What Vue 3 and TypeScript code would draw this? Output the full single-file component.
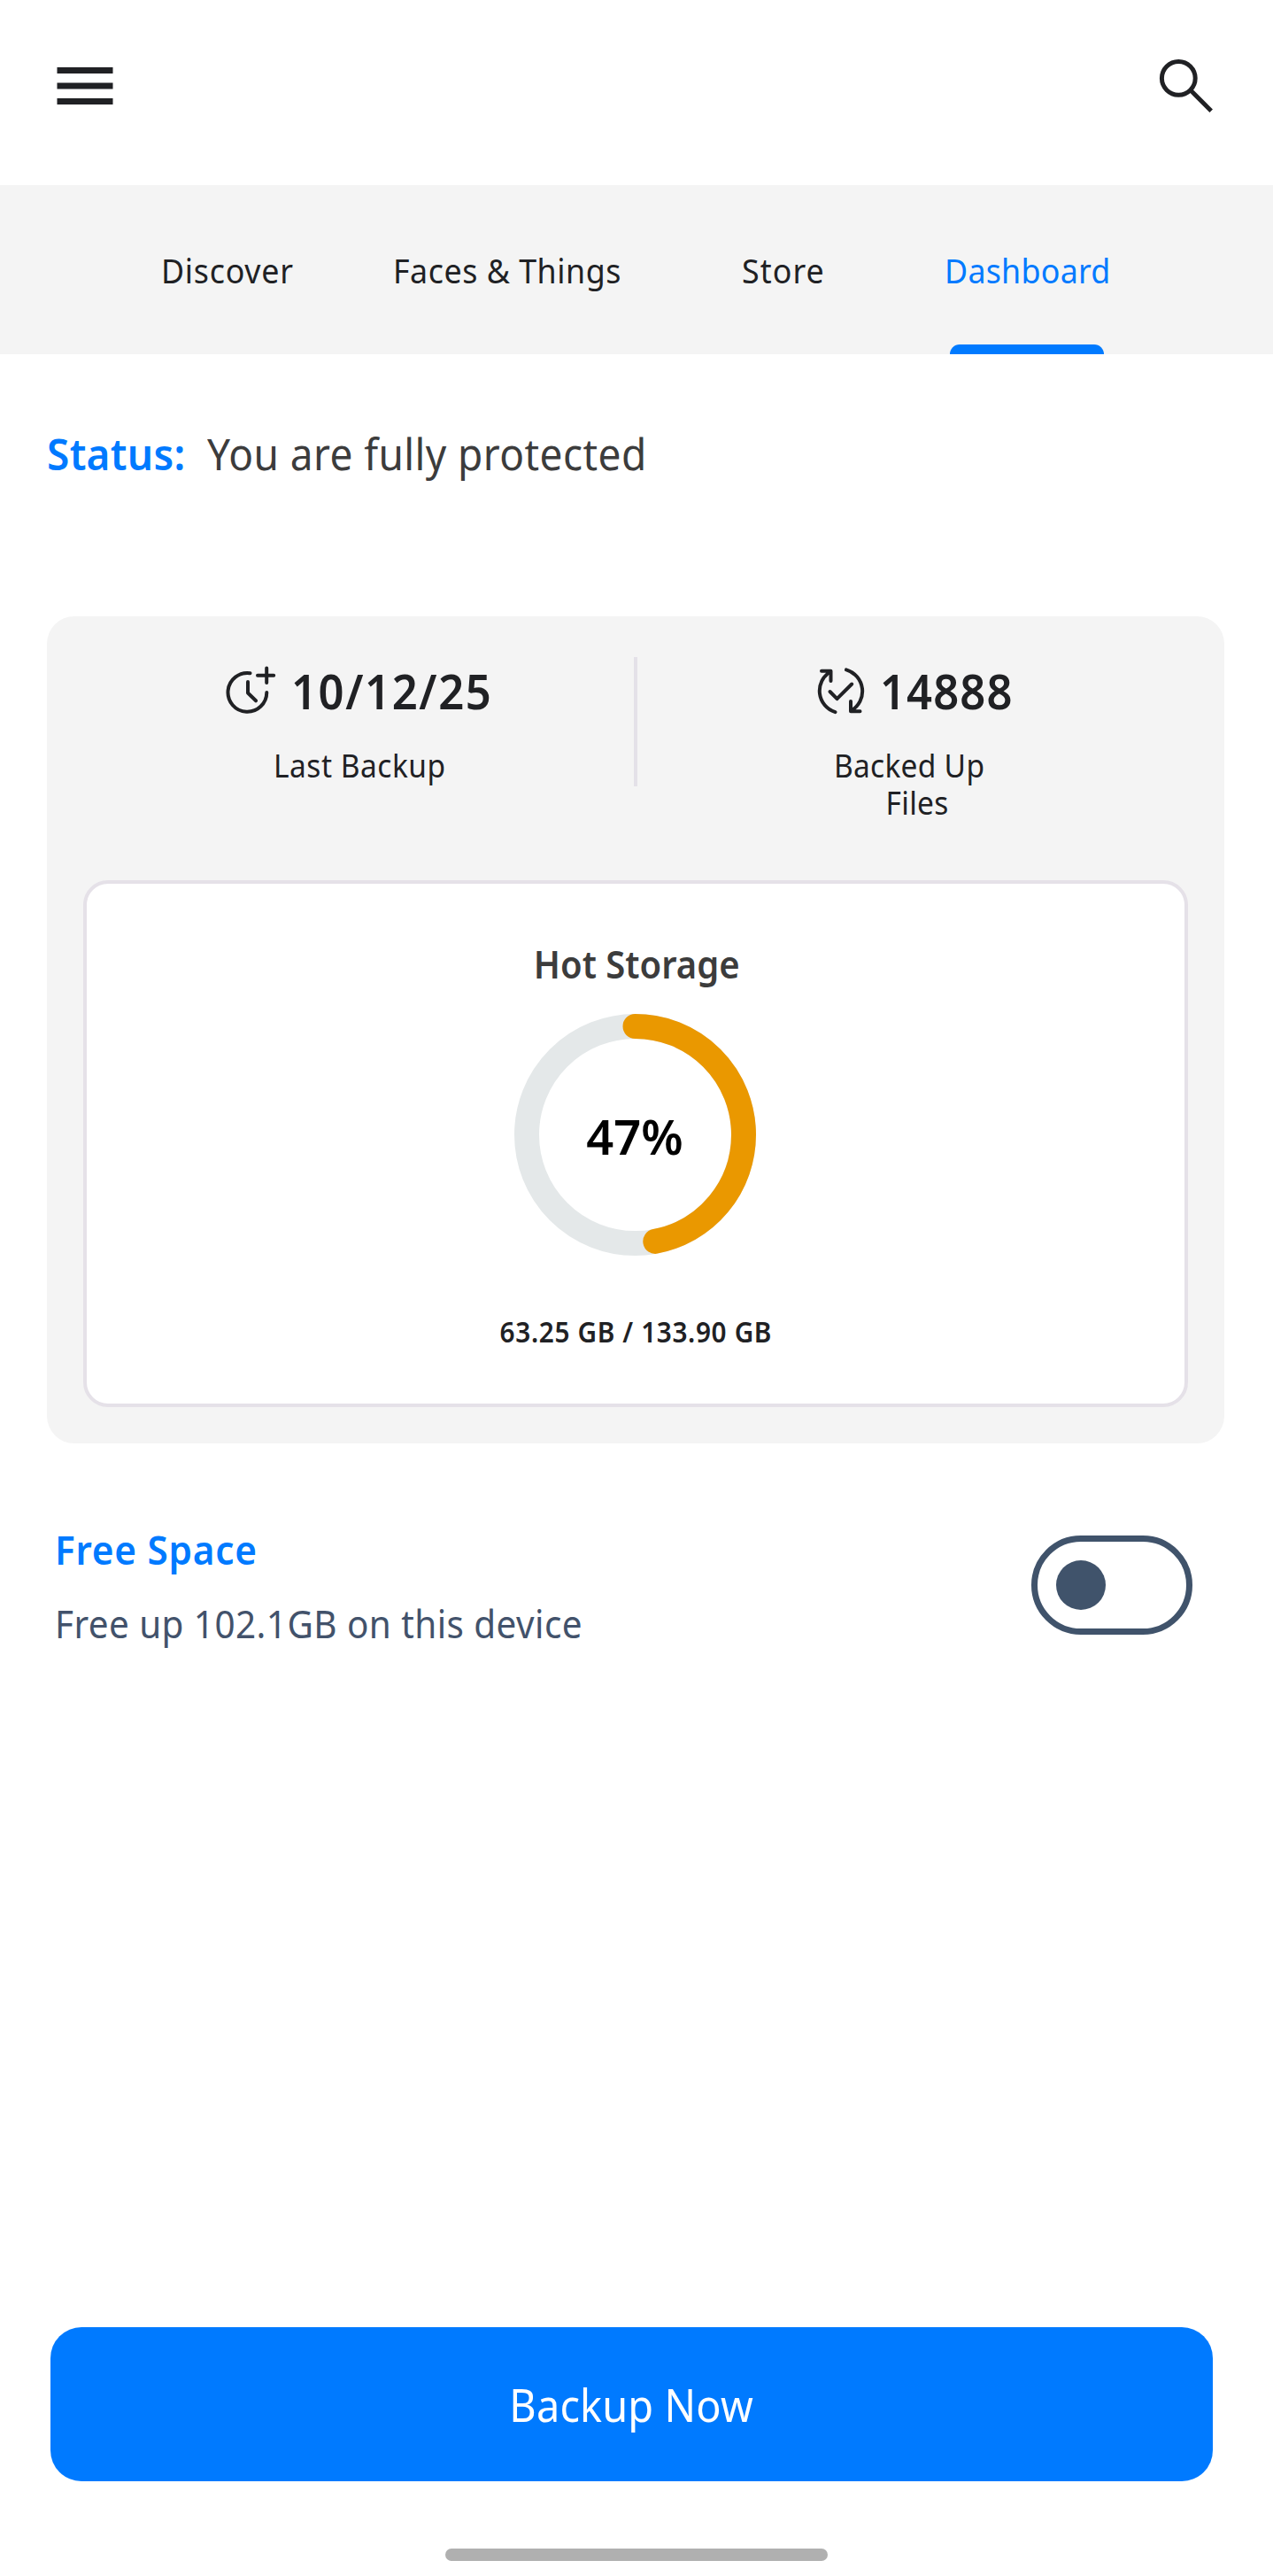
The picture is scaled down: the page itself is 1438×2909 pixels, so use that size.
<script setup lang="ts">
import { computed, ref } from 'vue'

const tabs = [
  { id: 'discover', label: 'Discover' },
  { id: 'faces', label: 'Faces & Things' },
  { id: 'store', label: 'Store' },
  { id: 'dashboard', label: 'Dashboard' },
]
const activeTab = ref('dashboard')
const freeSpace = ref(false)

const percent = 47
const radius = 122.5
const circumference = 2 * Math.PI * radius
const dash = computed(() => `${(circumference * percent) / 100} ${circumference}`)
</script>

<template>
  <div class="screen">
    <header class="topbar">
      <svg class="menu" viewBox="0 0 64 44" aria-label="Menu">
        <path d="M.5 0h63v7H.5zM.5 17.5h63v7H.5zM.5 35h63v7H.5z" fill="#202124" />
      </svg>
      <svg class="search" viewBox="0 0 64 64" fill="none" stroke="#202124" stroke-width="5" aria-label="Search">
        <circle cx="23.3" cy="23.3" r="18.9" />
        <path d="M36.5 36.5 60.2 60.2" />
      </svg>
    </header>

    <nav class="tabs">
      <button
        v-for="tab in tabs"
        :key="tab.id"
        :class="['tab', tab.id, { active: tab.id === activeTab }]"
        @click="activeTab = tab.id"
      ><span class="narrow">{{ tab.label }}</span></button>
    </nav>

    <section class="status">
      <strong class="narrow">Status:</strong>
      <span class="narrow">You are fully protected</span>
    </section>

    <section class="card">
      <div class="stats">
        <div class="stat backup">
          <div class="value">
            <svg viewBox="0 0 60 60" fill="none" stroke="#202124" stroke-width="4" stroke-linecap="round" stroke-linejoin="round">
              <path d="M29.5 10.2A21.9 21.9 0 1 0 48.3 32M27 20v12.5L36 41.3" />
              <path d="M38 12.8h18.2M48.2 4.5v16.6" />
            </svg>
            <b class="narrow">10/12/25</b>
          </div>
          <p class="label"><span class="narrow">Last Backup</span></p>
        </div>
        <div class="divider"></div>
        <div class="stat files">
          <div class="value">
            <svg viewBox="0 0 60 60" fill="none" stroke="#202124" stroke-width="4" stroke-linecap="round" stroke-linejoin="round">
              <path d="M8 7.7h10.5v11.2M17.9 8.6A25.2 25.2 0 0 0 23.5 54.2" />
              <path d="M51.5 53.3H41V42.1M41.6 52.4A25.2 25.2 0 0 0 36 6.4" />
              <path d="M17.5 31l8 8.2 16.7-16.7" />
            </svg>
            <b class="narrow">14888</b>
          </div>
          <p class="label"><span class="narrow">Backed Up&nbsp;&nbsp;<br />Files</span></p>
        </div>
      </div>

      <div class="storage">
        <h2 class="narrow">Hot Storage</h2>
        <div class="ring">
          <svg viewBox="0 0 273 273" fill="none" stroke-width="28">
            <circle cx="136.5" cy="136.5" :r="radius" stroke="#e4e8e9" />
            <circle
              cx="136.5"
              cy="136.5"
              :r="radius"
              stroke="#ea9800"
              stroke-linecap="round"
              :stroke-dasharray="dash"
              transform="rotate(-90 136.5 136.5)"
            />
          </svg>
          <span class="percent">{{ percent }}%</span>
        </div>
        <p class="usage narrow">63.25 GB / 133.90 GB</p>
      </div>
    </section>

    <section class="free">
      <div>
        <h3 class="narrow">Free Space</h3>
        <p class="narrow">Free up 102.1GB on this device</p>
      </div>
      <button :class="['toggle', { on: freeSpace }]" aria-label="Free Space" @click="freeSpace = !freeSpace">
        <span class="knob"></span>
      </button>
    </section>

    <footer class="bottom">
      <button class="cta"><span class="narrow">Backup Now</span></button>
      <div class="home"></div>
    </footer>
  </div>
</template>

<style>
body {
  margin: 0;
  background: #fff;
}
</style>

<style scoped>
.screen {
  display: flex;
  flex-direction: column;
  width: 1438px;
  height: 2909px;
  box-sizing: border-box;
  overflow: hidden;
  background: #fff;
  color: #202124;
  font-family: "Noto Sans", sans-serif;
}
h2, h3, p {
  margin: 0;
}
button {
  border: 0;
  padding: 0;
  font: inherit;
  background: none;
}
/* slightly condensed letterforms */
.narrow {
  display: inline-block;
  transform: scaleX(0.93);
  transform-origin: left center;
  white-space: nowrap;
}

.topbar {
  display: flex;
  justify-content: space-between;
  height: 209px;
  padding: 65px 66px 0 64px;
  box-sizing: border-box;
}
.menu {
  width: 64px;
  height: 44px;
  margin-top: 11px;
}
.search {
  width: 64px;
  height: 64px;
}

.tabs {
  display: grid;
  grid-template-columns: 262.6px 393.2px 229.2px 190px;
  height: 191px;
  padding-left: 181.8px;
  box-sizing: border-box;
  background: #f4f4f4;
}
.tab {
  position: relative;
  color: #202124;
  font-size: 38.5px;
  text-align: left;
}
.discover { letter-spacing: 0.79px; }
.faces { letter-spacing: 0.56px; }
.store { letter-spacing: 1.15px; }
.dashboard { letter-spacing: 0.26px; }
.tab.active {
  color: #007aff;
}
.tab.active::after {
  content: "";
  position: absolute;
  left: 6.5px;
  bottom: 0;
  width: 174px;
  height: 11px;
  border-radius: 11px 11px 0 0;
  background: #007aff;
}

.status {
  display: flex;
  height: 296px;
  padding: 82px 0 0 53px;
  box-sizing: border-box;
  font-size: 49.5px;
  line-height: 60px;
}
.status strong {
  flex: none;
  width: 180.6px;
  color: #007aff;
  font-weight: 600;
  letter-spacing: 0.33px;
}
.status span {
  color: #3c3c3c;
  letter-spacing: 0.44px;
}

.card {
  margin: 0 55px 0 53px;
  padding: 0 41px 41px;
  border-radius: 31px;
  background: #f4f4f4;
}
.stats {
  display: flex;
  height: 298px;
  padding-top: 46px;
  box-sizing: border-box;
}
.divider {
  width: 4px;
  height: 146px;
  background: #e4e1e8;
}
.stat {
  box-sizing: border-box;
  padding-top: 8px;
}
.backup {
  width: 622px;
  padding-left: 159px;
}
.files {
  padding-left: 200px;
}
.value {
  display: flex;
  height: 60px;
  font-size: 54.6px;
  line-height: 60px;
}
.value b {
  font-weight: 600;
}
.value svg {
  flex: none;
  width: 60px;
  height: 60px;
}
.backup .value {
  gap: 16px;
  letter-spacing: 1.7px;
}
.files .value {
  gap: 14.4px;
  letter-spacing: 1.15px;
}
.label {
  margin-top: 34px;
  font-size: 36px;
  line-height: 42px;
}
.backup .label {
  padding-left: 55.6px;
  letter-spacing: 0.56px;
}
.files .label {
  padding-left: 21.8px;
  letter-spacing: 0.3px;
}
.files .label span {
  text-align: center;
}

.storage {
  display: flex;
  flex-direction: column;
  align-items: center;
  height: 595px;
  padding-top: 66px;
  box-sizing: border-box;
  border: 4px solid #e5e1e8;
  border-radius: 28px;
  background: #fff;
}
.storage .narrow {
  transform-origin: center;
}
.storage h2 {
  margin-left: 2px;
  color: #3c3c3c;
  font-size: 43px;
  font-weight: 600;
  line-height: 50px;
}
.ring {
  position: relative;
  width: 273px;
  height: 273px;
  margin: 31px 1px 0 0;
}
.ring svg {
  display: block;
  width: 273px;
  height: 273px;
}
.percent {
  position: absolute;
  inset: 3px 1px 0 0;
  display: flex;
  align-items: center;
  justify-content: center;
  color: #000;
  font-size: 54.2px;
  font-weight: 600;
}
.usage {
  margin-top: 65.5px;
  font-size: 32px;
  font-weight: 600;
  line-height: 40px;
  letter-spacing: 0.68px;
}

.free {
  display: flex;
  justify-content: space-between;
  margin-top: 91px;
  padding: 0 91px 0 61.8px;
}
.free h3,
.free p {
  display: block;
}
.free h3 {
  color: #007aff;
  font-size: 45.5px;
  font-weight: 600;
  line-height: 56px;
  letter-spacing: 0.8px;
}
.free p {
  margin-top: 28px;
  color: #42526b;
  font-size: 43.5px;
  line-height: 56px;
  letter-spacing: 0.46px;
}
.toggle {
  display: flex;
  align-items: center;
  width: 182px;
  height: 112px;
  margin-top: 13px;
  padding: 0 21px;
  box-sizing: border-box;
  border: 7px solid #40536b;
  border-radius: 56px;
}
.toggle.on {
  justify-content: flex-end;
}
.knob {
  width: 56px;
  height: 56px;
  border-radius: 50%;
  background: #40536b;
}

.bottom {
  display: flex;
  flex-direction: column;
  align-items: center;
  margin-top: auto;
  padding-bottom: 17px;
}
.cta {
  width: 1313px;
  height: 174px;
  margin-right: 11px;
  border-radius: 35px;
  background: #007aff;
  color: #fff;
  font-size: 50.4px;
  letter-spacing: 0.15px;
}
.cta .narrow {
  transform-origin: center;
}
.home {
  width: 432px;
  height: 14px;
  margin-top: 76px;
  margin-right: 1px;
  border-radius: 7px;
  background: #b0b0b0;
}
</style>
